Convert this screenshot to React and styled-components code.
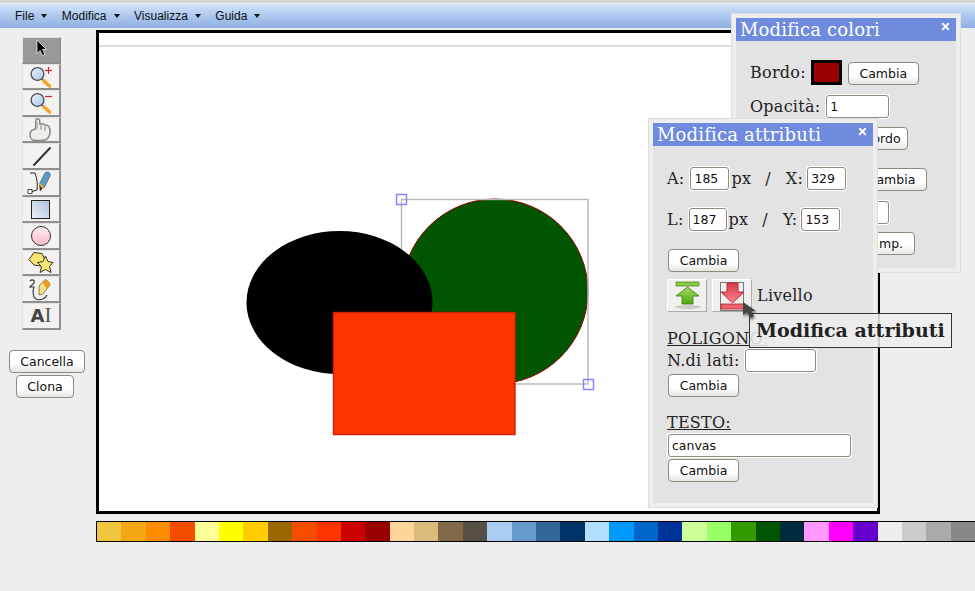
import React from 'react';
import styled, { createGlobalStyle } from 'styled-components';
import { X } from 'lucide-react';

const GlobalStyle = createGlobalStyle`
    html, body {
        margin: 0;
        height: 100%;
        overflow: hidden;
        background: #eee;
    }
    body {
        font-family: "DejaVu Serif", serif;
        color: #222;
    }
`;

const Page = styled.div`
    position: relative;
    width: 975px;
    height: 591px;
    overflow: hidden;
    box-sizing: border-box;
    border-top: 3px solid #d8d4cc;
`;

const MenuBar = styled.nav`
    display: flex;
    align-items: center;
    height: 25px;
    padding-left: 15px;
    gap: 14.5px;
    box-sizing: border-box;
    background: linear-gradient(#d3e4fa, #a9c5ee 55%, #8fb0e2);
    border-top: 1px solid #e8eefa;
    font: 12px "Liberation Sans", Arial, sans-serif;
    color: #111;
`;

const MenuItem = styled.span`
    display: flex;
    align-items: center;
    gap: 7px;
    &::after {
        content: "";
        border: 3.5px solid transparent;
        border-top: 4px solid #111;
        border-bottom: 0;
    }
`;

const Workspace = styled.div`
    display: flex;
    align-items: flex-start;
    padding-top: 2px;
`;

const LeftColumn = styled.div`
    display: flex;
    flex-direction: column;
    align-items: flex-start;
    width: 96px;
    flex: none;
    padding: 7px 0 0 9px;
    box-sizing: border-box;
`;

const ToolGrid = styled.div`
    display: grid;
    grid-auto-rows: 26.6px;
    width: 39px;
    margin: 0 0 20px 13px;
`;

const Tool = styled.div`
    box-sizing: border-box;
    width: 39px;
    height: 26.6px;
    padding-top: 1px;
    display: flex;
    align-items: center;
    justify-content: center;
    overflow: hidden;
    border: solid;
    border-width: 1px 2px 2px 1px;
    border-color: #e4e2e0 #8f8f8f #8f8f8f #e4e2e0;
    background: ${(p) => (p.$active ? '#999' : '#f4f2f0')};
`;

const ToolSvg = styled.svg`
    flex: none;
    width: 39px;
    height: 26px;
`;

const AiLabel = styled.span`
    font: bold 18px "DejaVu Sans", sans-serif;
    color: #444;
    margin-top: -1px;
`;

const AiBeam = styled.span`
    font: 21px "Liberation Serif", serif;
    color: #555;
    margin-top: -2px;
`;

const ActionButton = styled.button`
    box-sizing: border-box;
    display: block;
    flex: none;
    height: 23px;
    width: ${(p) => p.$width || 71}px;
    margin: ${(p) => p.$top || 0}px 0 0 ${(p) => p.$left || 0}px;
    padding: 0 0 0 ${(p) => p.$pad || 0}px;
    border: 1px solid #8f8a7c;
    border-radius: 4px;
    background: linear-gradient(#fff, #fff 60%, #e6e6e4);
    font: 12.5px "DejaVu Sans", sans-serif;
    color: #111;
    white-space: nowrap;
    overflow: hidden;
`;

const Canvas = styled.div`
    box-sizing: border-box;
    width: 784px;
    height: 484px;
    flex: none;
    border: 3px solid #000;
    background: #fff;
`;

const Ruler = styled.div`
    height: 12px;
    border-bottom: 2px solid #ddd;
`;

const Drawing = styled.svg`
    display: block;
    width: 778px;
    height: 464px;
`;

const Palette = styled.div`
    display: flex;
    height: 19px;
    margin: 7px 0 0 96px;
    border: 1px solid #000;
    border-right: 0;
    width: 900px;
`;

const Swatch = styled.div`
    flex: none;
    width: 24.4px;
    background: ${(p) => p.$color};
`;

const Panel = styled.section`
    position: absolute;
    left: ${(p) => p.$left}px;
    top: ${(p) => p.$top}px;
    z-index: ${(p) => p.$z};
    box-sizing: border-box;
    width: 230px;
    padding: 4px;
    background: #eee;
    border: 1px solid #ddd;
`;

const PanelTitle = styled.h3`
    display: flex;
    align-items: center;
    justify-content: space-between;
    box-sizing: border-box;
    height: 23px;
    margin: 0;
    padding: 0 5px 0 4px;
    background: #6e8bde;
    color: #fff;
    font: 18px/23px "DejaVu Serif", serif;
    letter-spacing: 0.17px;
    svg {
        margin-top: -6px;
    }
`;

const PanelBody = styled.div`
    display: flow-root;
    box-sizing: border-box;
    height: ${(p) => p.$height}px;
    padding-left: 14px;
    background: #e3e3e3;
    font-size: 16px;
    letter-spacing: 0.25px;
`;

const Row = styled.div`
    display: flex;
    align-items: center;
    height: ${(p) => p.$height || 23}px;
    margin-top: ${(p) => p.$top || 0}px;
`;

const Label = styled.span`
    margin-left: ${(p) => p.$left || 0}px;
    margin-top: ${(p) => p.$raise ? -p.$raise : 0}px;
    white-space: nowrap;
`;

const SectionLabel = styled.div`
    height: 18px;
    margin-top: ${(p) => p.$top}px;
    line-height: 20px;
    text-decoration: underline;
`;

const Field = styled.input`
    box-sizing: border-box;
    flex: none;
    display: block;
    height: 23px;
    width: ${(p) => p.$width}px;
    margin-left: ${(p) => p.$left || 0}px;
    padding: 0 3px;
    border: 1px solid #8f8a7c;
    border-radius: 3px;
    box-shadow: 0 0 0 1px #fff;
    background: #fff;
    font: 12.5px "DejaVu Sans", sans-serif;
    color: #111;
    outline: none;
`;

const ColorChip = styled.div`
    box-sizing: border-box;
    flex: none;
    width: 31px;
    height: 25px;
    margin: -2px 6px 0 5px;
    border: 3px solid #000;
    background: #990000;
`;

const LayerButton = styled.div`
    box-sizing: border-box;
    flex: none;
    width: 40px;
    height: 33px;
    margin-right: 5px;
    border: 1px solid;
    border-color: #fff #aaa #aaa #fff;
    background: #f2f0ee;
    svg {
        display: block;
        width: 38px;
        height: 31px;
    }
`;

const Tooltip = styled.div`
    position: absolute;
    left: 749px;
    top: 310px;
    z-index: 5;
    box-sizing: border-box;
    width: 203px;
    height: 35px;
    padding-left: 6px;
    border: 1px solid #333;
    background: rgba(238, 238, 238, 0.86);
    font: bold 19px/32px "DejaVu Serif", serif;
    color: #222;
    white-space: nowrap;
`;

const MouseCursor = styled.svg`
    position: absolute;
    left: 737px;
    top: 293px;
    z-index: 6;
    width: 26px;
    height: 30px;
`;

const MENUS = ['File', 'Modifica', 'Visualizza', 'Guida'];

const COLORS = [
    '#f0c63f', '#f4a713', '#ff8c00', '#f74d00', '#ffff99', '#ffff00', '#ffcc00', '#996600',
    '#f74d00', '#ff3300', '#cc0000', '#990000', '#ffd699', '#dbbb7b', '#806849', '#555043',
    '#a9ccf0', '#6699cc', '#336699', '#003366', '#b3dfff', '#0099ff', '#0066cc', '#003399',
    '#ccff99', '#99ff66', '#339900', '#005500', '#002b3f', '#ff99ff', '#ff00ff', '#6600cc',
    '#eeeeee', '#cccccc', '#aaaaaa', '#888888',
];

function Magnifier({ sign }) {
    return (
        <ToolSvg viewBox="0 0 39 26">
            <path d="M20 15 L27 22" stroke="#555" strokeWidth="1.5" />
            <path d="M22 17 L27.5 22" stroke="#f3a52a" strokeWidth="3.6" strokeLinecap="round" />
            <circle cx="15.5" cy="10" r="6.4" fill="url(#lens)" stroke="#4b5660" strokeWidth="1.4" />
            <path d="M23 6.5 H30" stroke="#cc2030" strokeWidth="1.2" />
            {sign === '+' && <path d="M26.5 3 V10" stroke="#cc2030" strokeWidth="1.2" />}
        </ToolSvg>
    );
}

function ToolIcon({ name }) {
    switch (name) {
    case 'arrow':
        return (
            <ToolSvg viewBox="0 0 39 26">
                <path d="M15 3 V16.5 L18 13.5 L20.5 18.5 L23 17.5 L20.5 12.5 H24.5 Z" fill="#000" stroke="#fff" strokeWidth="0.7" />
            </ToolSvg>
        );
    case 'hand':
        return (
            <ToolSvg viewBox="0 0 39 26">
                <path d="M14 2.5 C15 1.5 17 1.5 17.5 3 L18 7 C20 6.5 22 7 23 8 C25 8 27 9 27.5 11 C28.5 14 28 18 26 21 C24.5 23 22 23.5 19 23.5 H13 C10 23.5 8 21 8 17.5 C8 15 10 12.5 13.5 12 Z" fill="#eeeeea" stroke="#85887f" strokeWidth="1.5" />
                <path d="M15 6 V11 M19 8.5 V12 M23 10 V13" stroke="#b4b6ae" strokeWidth="1.8" strokeLinecap="round" />
            </ToolSvg>
        );
    case 'line':
        return (
            <ToolSvg viewBox="0 0 39 26">
                <path d="M12 21 L28 4" stroke="#333" strokeWidth="2" strokeLinecap="round" />
            </ToolSvg>
        );
    case 'pen':
        return (
            <ToolSvg viewBox="0 0 39 26">
                <path d="M8 3 H13 C15 9 16 14 15 20 L10 21.5" fill="none" stroke="#222" strokeWidth="1" />
                <rect x="6" y="19.5" width="4" height="4" fill="#fff" stroke="#222" strokeWidth="0.8" />
                <path d="M17 14 L21 18 L18 21.5 Z" fill="#333" />
                <path d="M23 3 C26 0.5 29 3 28 6 L22 18 L17.5 14 Z" fill="#5b9ac8" stroke="#345" strokeWidth="0.6" />
                <path d="M18 13 L22 17 L21 19 L17 15 Z" fill="#e6b020" />
            </ToolSvg>
        );
    case 'rect':
        return (
            <ToolSvg viewBox="0 0 39 26">
                <rect x="9.5" y="3.5" width="18" height="18" fill="url(#rectFill)" stroke="#222" strokeWidth="1" />
            </ToolSvg>
        );
    case 'circle':
        return (
            <ToolSvg viewBox="0 0 39 26">
                <circle cx="19" cy="13" r="9.5" fill="url(#pinkFill)" stroke="#333" strokeWidth="1" />
            </ToolSvg>
        );
    case 'star':
        return (
            <ToolSvg viewBox="0 0 39 26">
                <path d="M12 2.5 L20 3.5 L23 10 L19 16 L12 15 L7 9.5 Z" fill="#f8e672" stroke="#333" strokeWidth="1" />
                <path d="M23.5 6 L26 11.5 L31 12.5 L27.5 16.5 L29 22.5 L23.5 19.5 L18 22.5 L19.5 16.5 L15.5 12.5 L21 11.5 Z" fill="#f8e672" stroke="#333" strokeWidth="1" />
            </ToolSvg>
        );
    case 'free':
        return (
            <ToolSvg viewBox="0 0 39 26">
                <path d="M8 4 C10 2 13 3 12 6 L8 10 H12 C10 14 11 21 15 22.5 C19 23.5 24 21 25 18" fill="none" stroke="#333" strokeWidth="1.1" />
                <path d="M17 9 L23 2.5 C26 3.5 28 6 28 8 L21 17 L17 18 Z" fill="#f6e07a" stroke="#555" strokeWidth="0.7" />
                <path d="M23 2.5 C26 3.5 28 6 28 8 L25 12 L21 6 Z" fill="#ee9a1c" />
            </ToolSvg>
        );
    default:
        return null;
    }
}

function Shapes() {
    return (
        <Drawing viewBox="99 47 778 464">
            <ellipse cx="495" cy="291.5" rx="93" ry="92.5" fill="#005500" stroke="#990000" strokeWidth="1" />
            <rect x="401.5" y="199.5" width="186.5" height="184.5" fill="none" stroke="#b8b8b8" strokeWidth="1.4" />
            <rect x="396.5" y="194.5" width="10" height="10" fill="none" stroke="#8888ff" strokeWidth="1.5" />
            <rect x="583.5" y="379.5" width="10" height="10" fill="none" stroke="#8888ff" strokeWidth="1.5" />
            <ellipse cx="339.5" cy="302.5" rx="93" ry="71.5" fill="#000" />
            <rect x="333.5" y="312.5" width="181.5" height="122" fill="#ff3300" stroke="#cc2200" strokeWidth="1.4" />
        </Drawing>
    );
}

function ColorsPanel() {
    return (
        <Panel $left={731} $top={10} $z={1}>
            <PanelTitle>Modifica colori<X size={11} strokeWidth={4} /></PanelTitle>
            <PanelBody $height={227}>
                <Row $top={21}>
                    <Label $raise={2}>Bordo:</Label>
                    <ColorChip />
                    <ActionButton>Cambia</ActionButton>
                </Row>
                <Row $top={10}>
                    <Label>Opacità:</Label>
                    <Field $width={63} $left={6} defaultValue="1" />
                </Row>
                <Row $top={9}>
                    <ActionButton $width={83} $left={75}>Togli bordo</ActionButton>
                </Row>
                <Row $top={18}>
                    <ActionButton $left={106}>Cambia</ActionButton>
                </Row>
                <Row $top={10}>
                    <Field $width={63} $left={76} />
                </Row>
                <Row $top={8}>
                    <ActionButton $width={90} $left={75} $pad={10}>Togli mp.</ActionButton>
                </Row>
            </PanelBody>
        </Panel>
    );
}

function AttributesPanel() {
    return (
        <Panel $left={648} $top={115} $z={2}>
            <PanelTitle>Modifica attributi<X size={11} strokeWidth={4} /></PanelTitle>
            <PanelBody $height={357}>
                <Row $top={21}>
                    <Label>A:</Label>
                    <Field $width={39} $left={6} defaultValue="185" />
                    <Label $left={2}>px</Label>
                    <Label $left={14}>/</Label>
                    <Label $left={15}>X:</Label>
                    <Field $width={39} $left={4} defaultValue="329" />
                </Row>
                <Row $top={18}>
                    <Label>L:</Label>
                    <Field $width={38} $left={5} defaultValue="187" />
                    <Label $left={2}>px</Label>
                    <Label $left={14}>/</Label>
                    <Label $left={15}>Y:</Label>
                    <Field $width={39} $left={4} defaultValue="153" />
                </Row>
                <Row $top={18}>
                    <ActionButton $left={1}>Cambia</ActionButton>
                </Row>
                <Row $top={7} $height={33}>
                    <LayerButton>
                        <svg viewBox="0 0 38 31">
                            <ellipse cx="20" cy="27" rx="13" ry="2" fill="#ccc" />
                            <path d="M8 2 H31 V6 H8 Z" fill="#8ccb4a" stroke="#4d8a14" strokeWidth="0.8" />
                            <path d="M19.5 7 L31 16 H25 V24 H14 V16 H8 Z" fill="url(#greenFill)" stroke="#3f8a10" strokeWidth="0.9" />
                        </svg>
                    </LayerButton>
                    <LayerButton>
                        <svg viewBox="0 0 38 31">
                            <rect x="7.5" y="2.5" width="23" height="28" fill="none" stroke="#000" strokeWidth="1" strokeDasharray="1 1" />
                            <path d="M14 3 H25 V12 H31 L19.5 23 L8 12 H14 Z" fill="url(#redFill)" stroke="#b8202c" strokeWidth="0.9" />
                            <path d="M8 24 H31 V29 H8 Z" fill="#ee6470" stroke="#b8202c" strokeWidth="0.8" />
                        </svg>
                    </LayerButton>
                    <Label>Livello</Label>
                </Row>
                <SectionLabel $top={17}>POLIGONO:</SectionLabel>
                <Row $top={2}>
                    <Label>N.di lati:</Label>
                    <Field $width={71} $left={5} />
                </Row>
                <Row $top={2}>
                    <ActionButton $left={1}>Cambia</ActionButton>
                </Row>
                <SectionLabel $top={16}>TESTO:</SectionLabel>
                <Row $top={3}>
                    <Field $width={183} $left={1} defaultValue="canvas" />
                </Row>
                <Row $top={2}>
                    <ActionButton $left={1}>Cambia</ActionButton>
                </Row>
            </PanelBody>
        </Panel>
    );
}

export default function App() {
    return (
        <Page>
            <GlobalStyle />
            <svg width="0" height="0" style={{ position: 'absolute' }}>
                <defs>
                    <linearGradient id="lens" x1="0" y1="0" x2="1" y2="1">
                        <stop offset="0" stopColor="#eef4fb" />
                        <stop offset="1" stopColor="#a9c4e4" />
                    </linearGradient>
                    <linearGradient id="rectFill" x1="1" y1="0" x2="0" y2="1">
                        <stop offset="0" stopColor="#a9c0da" />
                        <stop offset="1" stopColor="#eef3f8" />
                    </linearGradient>
                    <linearGradient id="pinkFill" x1="0" y1="0" x2="0" y2="1">
                        <stop offset="0" stopColor="#fff0f2" />
                        <stop offset="1" stopColor="#ffb8c4" />
                    </linearGradient>
                    <linearGradient id="greenFill" x1="0" y1="0" x2="0" y2="1">
                        <stop offset="0" stopColor="#a6dc6a" />
                        <stop offset="1" stopColor="#4ea50e" />
                    </linearGradient>
                    <linearGradient id="redFill" x1="0" y1="0" x2="0" y2="1">
                        <stop offset="0" stopColor="#d83c48" />
                        <stop offset="1" stopColor="#f88490" />
                    </linearGradient>
                </defs>
            </svg>
            <MenuBar>
                {MENUS.map((menu) => <MenuItem key={menu}>{menu}</MenuItem>)}
            </MenuBar>
            <Workspace>
                <LeftColumn>
                    <ToolGrid>
                        <Tool $active><ToolIcon name="arrow" /></Tool>
                        <Tool><Magnifier sign="+" /></Tool>
                        <Tool><Magnifier sign="-" /></Tool>
                        <Tool><ToolIcon name="hand" /></Tool>
                        <Tool><ToolIcon name="line" /></Tool>
                        <Tool><ToolIcon name="pen" /></Tool>
                        <Tool><ToolIcon name="rect" /></Tool>
                        <Tool><ToolIcon name="circle" /></Tool>
                        <Tool><ToolIcon name="star" /></Tool>
                        <Tool><ToolIcon name="free" /></Tool>
                        <Tool><AiLabel>A</AiLabel><AiBeam>I</AiBeam></Tool>
                    </ToolGrid>
                    <ActionButton $width={76}>Cancella</ActionButton>
                    <ActionButton $width={58} $top={2} $left={7}>Clona</ActionButton>
                </LeftColumn>
                <Canvas>
                    <Ruler />
                    <Shapes />
                </Canvas>
            </Workspace>
            <Palette>
                {COLORS.map((color, i) => <Swatch key={i} $color={color} />)}
            </Palette>
            <ColorsPanel />
            <AttributesPanel />
            <Tooltip>Modifica attributi</Tooltip>
            <MouseCursor viewBox="0 0 26 30">
                <defs>
                    <filter id="soft"><feGaussianBlur stdDeviation="1.2" /></filter>
                </defs>
                <path d="M6 6 V19 L10 16 L13 22 L17 20 L14 15 H19 Z" fill="#222" opacity="0.6" filter="url(#soft)" transform="translate(1 2)" />
                <path d="M6 6 V19 L10 16 L13 22 L17 20 L14 15 H19 Z" fill="#444" />
            </MouseCursor>
        </Page>
    );
}
